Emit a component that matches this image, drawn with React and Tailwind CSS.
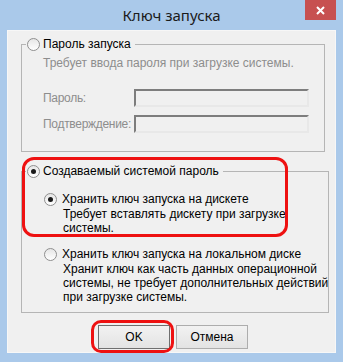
import React from 'react';

const Radio = ({ checked }) => (
  <span className="flex h-[13px] w-[13px] shrink-0 items-center justify-center rounded-full border border-[#8f8f8f] bg-linear-to-b from-[#e6e6e6] to-[#ffffff]">
    {checked && <span className="h-[5px] w-[5px] rounded-full bg-[#1a1a1a]" />}
  </span>
);

const Field = ({ label }) => (
  <div className="flex items-center">
    <span className="w-[91px] tracking-[-0.3px] text-[#8d8d8d]">{label}</span>
    <div className="h-[18px] w-[175px] border-2 border-t-[#7d7d7d] border-l-[#7d7d7d] border-r-[#e8e8e8] border-b-[#e8e8e8] bg-[#f0f0f0]" />
  </div>
);

const App = () => {
  return (
    <div
      className="relative flex h-[362px] w-[343px] flex-col overflow-hidden bg-[#aac9ea] text-[12px] leading-[15px] whitespace-nowrap text-black"
      style={{ fontFamily: '"Liberation Sans", Arial, sans-serif' }}
    >
      <div
        className="flex h-[30px] shrink-0 items-center justify-center text-[15px] text-[#1b1b1b]"
        style={{ fontFamily: '"Noto Sans", sans-serif' }}
      >
        Ключ запуска
      </div>
      <button className="absolute right-[7px] top-0 flex h-[20px] w-[31px] items-center justify-center bg-[#c75050]">
        <svg width="9" height="9" viewBox="0 0 9 9">
          <path d="M1 1 L8 8 M8 1 L1 8" stroke="#fff" strokeWidth="2" />
        </svg>
      </button>

      <div className="mx-[7px] mb-[9px] flex flex-1 flex-col border border-[#f7f7f7] bg-[#f0f0f0] pl-[13px] pr-[10px] pt-[5px]">
        <fieldset className="h-[116px] border border-[#b5b5b5]">
          <legend className="ml-[4px] flex h-[16px] items-center gap-[3px] pl-[1px] pr-[4px]">
            <Radio />
            <span>Пароль запуска</span>
          </legend>
          <div className="pl-[21px]">
            <div className="mt-[4px] text-[#8d8d8d]">
              Требует ввода пароля при загрузке системы.
            </div>
            <div className="mt-[18px] flex flex-col gap-[8px]">
              <Field label="Пароль:" />
              <Field label="Подтверждение:" />
            </div>
          </div>
        </fieldset>

        <fieldset className="relative mt-[11px] h-[150px] border border-[#b5b5b5]">
          <legend className="ml-[4px] flex h-[16px] items-center gap-[3px] pl-[1px] pr-[4px]">
            <Radio checked />
            <span>Создаваемый системой пароль</span>
          </legend>
          <div className="pointer-events-none absolute left-[0px] top-[-22px] h-[80px] w-[266px] rounded-[12px] border-[3px] border-[#ee1111]" />

          <div className="pl-[22px]">
            <div className="mt-[13px] flex h-[15px] items-center gap-[5px]">
              <Radio checked />
              <span>Хранить ключ запуска на дискете</span>
            </div>
            <div className="pl-[19px] leading-[14px]">
              Требует вставлять дискету при загрузке
              <br />
              системы.
            </div>

            <div className="mt-[12px] flex h-[15px] items-center gap-[5px]">
              <Radio />
              <span>Хранить ключ запуска на локальном диске</span>
            </div>
            <div className="pl-[19px] leading-[14px]">
              Хранит ключ как часть данных операционной
              <br />
              системы, не требует дополнительных действий
              <br />
              при загрузке системы.
            </div>
          </div>
        </fieldset>

        <div className="mt-[12px] flex justify-center gap-[6px]">
          <div className="relative">
            <button className="h-[24px] w-[72px] border border-[#6f6f6f] bg-linear-to-b from-[#f2f2f2] to-[#e3e3e3]">
              OK
            </button>
            <div className="pointer-events-none absolute -bottom-[4px] -left-[7px] -right-[4px] -top-[5px] rounded-[10px] border-[3px] border-[#ee1111]" />
          </div>
          <button className="h-[24px] w-[72px] border border-[#adadad] bg-linear-to-b from-[#f2f2f2] to-[#e3e3e3]">
            Отмена
          </button>
        </div>
      </div>
    </div>
  );
};

export default App;
